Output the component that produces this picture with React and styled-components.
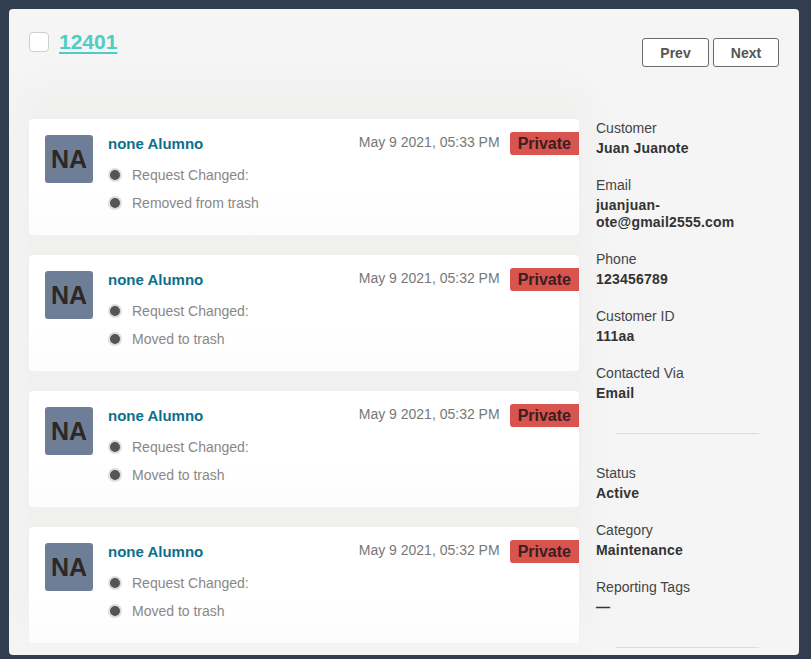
import React from "react";
import styled, { createGlobalStyle } from "styled-components";

const GlobalStyle = createGlobalStyle`
  html, body {
    margin: 0;
    padding: 0;
    background-color: #323e4f;
    font-family: "Liberation Sans", Arial, sans-serif;
    overflow: hidden;
  }
`;

const Page = styled.div`
  width: 811px;
  height: 659px;
  padding: 9px 0 0 9px;
  box-sizing: border-box;
`;

const Modal = styled.div`
  width: 790px;
  height: 646px;
  box-sizing: border-box;
  padding: 23px 20px 0 20px;
  background-color: #f5f5f5;
  border-radius: 4px;
  overflow: hidden;
`;

const Header = styled.div`
  display: flex;
  justify-content: space-between;
  align-items: flex-start;
`;

const TitleGroup = styled.div`
  display: flex;
  align-items: center;
  gap: 10px;
`;

const Checkbox = styled.div`
  width: 20px;
  height: 20px;
  box-sizing: border-box;
  border: 1px solid #cfcfcf;
  border-radius: 4px;
  background-color: #ffffff;
`;

const TitleLink = styled.a`
  font-size: 21px;
  line-height: 20px;
  font-weight: bold;
  color: #4ecdc4;
  text-decoration: underline;
  text-underline-offset: 3px;
  text-decoration-thickness: 2px;
  cursor: pointer;
`;

const NavButtons = styled.div`
  display: flex;
  gap: 4px;
  margin-top: 6px;
`;

const NavButton = styled.button`
  height: 29px;
  width: ${(props) => props.width}px;
  padding: 0;
  border: 1px solid #6b6b6b;
  border-radius: 3px;
  background-color: #ffffff;
  font-family: "Liberation Sans", Arial, sans-serif;
  font-size: 14px;
  font-weight: bold;
  color: #555555;
  cursor: pointer;
`;

const Body = styled.div`
  display: flex;
  align-items: flex-start;
  gap: 17px;
  margin-top: 52px;
`;

const Feed = styled.div`
  width: 550px;
  flex-shrink: 0;
  display: flex;
  flex-direction: column;
  gap: 20px;
  background-color: #f0f0ef;
  box-shadow: 0 -20px 30px 14px #f0f0ef;
  border-radius: 16px;
`;

const Card = styled.div`
  height: 116px;
  box-sizing: border-box;
  padding: 16px 0 0 16px;
  display: flex;
  gap: 15px;
  background: linear-gradient(to bottom, #ffffff 60%, #fcfcfc);
  border-radius: 4px;
`;

const Avatar = styled.div`
  width: 48px;
  height: 48px;
  flex-shrink: 0;
  display: flex;
  align-items: center;
  justify-content: center;
  background-color: #6f7e97;
  border-radius: 3px;
  font-size: 25px;
  font-weight: bold;
  color: #2d2823;
`;

const Content = styled.div`
  flex: 1;
  display: flex;
  flex-direction: column;
`;

const TopRow = styled.div`
  display: flex;
  justify-content: space-between;
  align-items: flex-start;
`;

const Name = styled.div`
  font-size: 15px;
  line-height: 18px;
  font-weight: bold;
  color: #0b6f8d;
`;

const Meta = styled.div`
  display: flex;
  align-items: flex-start;
  gap: 10px;
`;

const Date = styled.span`
  font-size: 14px;
  line-height: 18px;
  margin-top: -2px;
  color: #777777;
`;

const Badge = styled.span`
  margin-top: -3px;
  height: 23px;
  line-height: 23px;
  padding: 0 8px;
  background-color: #d9534f;
  border-radius: 3px 0 0 3px;
  font-size: 16px;
  font-weight: bold;
  color: #3a2020;
`;

const Events = styled.ul`
  list-style: none;
  margin: 6px 0 0 0;
  padding: 0;
`;

const Event = styled.li`
  display: flex;
  align-items: center;
  gap: 10px;
  height: 28px;
  font-size: 14px;
  color: #888888;
`;

const Dot = styled.span`
  width: 10px;
  height: 10px;
  border-radius: 50%;
  background-color: #555555;
  border: 2px solid #dddddd;
`;

const Sidebar = styled.div`
  width: 183px;
  flex-shrink: 0;
  margin-top: -1px;
`;

const Field = styled.div`
  margin-bottom: 18px;
`;

const Label = styled.div`
  font-size: 14px;
  line-height: 20px;
  color: #444444;
`;

const Value = styled.div`
  margin-top: 2px;
  font-size: 14px;
  line-height: 17px;
  font-weight: bold;
  letter-spacing: 0.2px;
  color: #333333;
`;

const Divider = styled.hr`
  margin: 31px 20px 29px 20px;
  border: none;
  border-top: 1px solid #dddddd;
`;

const entries = [
  { date: "May 9 2021, 05:33 PM", action: "Removed from trash" },
  { date: "May 9 2021, 05:32 PM", action: "Moved to trash" },
  { date: "May 9 2021, 05:32 PM", action: "Moved to trash" },
  { date: "May 9 2021, 05:32 PM", action: "Moved to trash" },
];

const contact = [
  { label: "Customer", value: "Juan Juanote" },
  { label: "Email", value: "juanjuan-ote@gmail2555.com" },
  { label: "Phone", value: "123456789" },
  { label: "Customer ID", value: "111aa" },
  { label: "Contacted Via", value: "Email" },
];

const details = [
  { label: "Status", value: "Active" },
  { label: "Category", value: "Maintenance" },
  { label: "Reporting Tags", value: "—" },
];

function App() {
  return (
    <Page>
      <GlobalStyle />
      <Modal>
        <Header>
          <TitleGroup>
            <Checkbox />
            <TitleLink>12401</TitleLink>
          </TitleGroup>
          <NavButtons>
            <NavButton width={67}>Prev</NavButton>
            <NavButton width={66}>Next</NavButton>
          </NavButtons>
        </Header>

        <Body>
          <Feed>
            {entries.map((item, index) => (
              <Card key={index}>
                <Avatar>NA</Avatar>
                <Content>
                  <TopRow>
                    <Name>none Alumno</Name>
                    <Meta>
                      <Date>{item.date}</Date>
                      <Badge>Private</Badge>
                    </Meta>
                  </TopRow>
                  <Events>
                    <Event>
                      <Dot />
                      Request Changed:
                    </Event>
                    <Event>
                      <Dot />
                      {item.action}
                    </Event>
                  </Events>
                </Content>
              </Card>
            ))}
          </Feed>

          <Sidebar>
            {contact.map((item) => (
              <Field key={item.label}>
                <Label>{item.label}</Label>
                <Value>{item.value}</Value>
              </Field>
            ))}
            <Divider />
            {details.map((item) => (
              <Field key={item.label}>
                <Label>{item.label}</Label>
                <Value>{item.value}</Value>
              </Field>
            ))}
            <Divider />
          </Sidebar>
        </Body>
      </Modal>
    </Page>
  );
}

export default App;
